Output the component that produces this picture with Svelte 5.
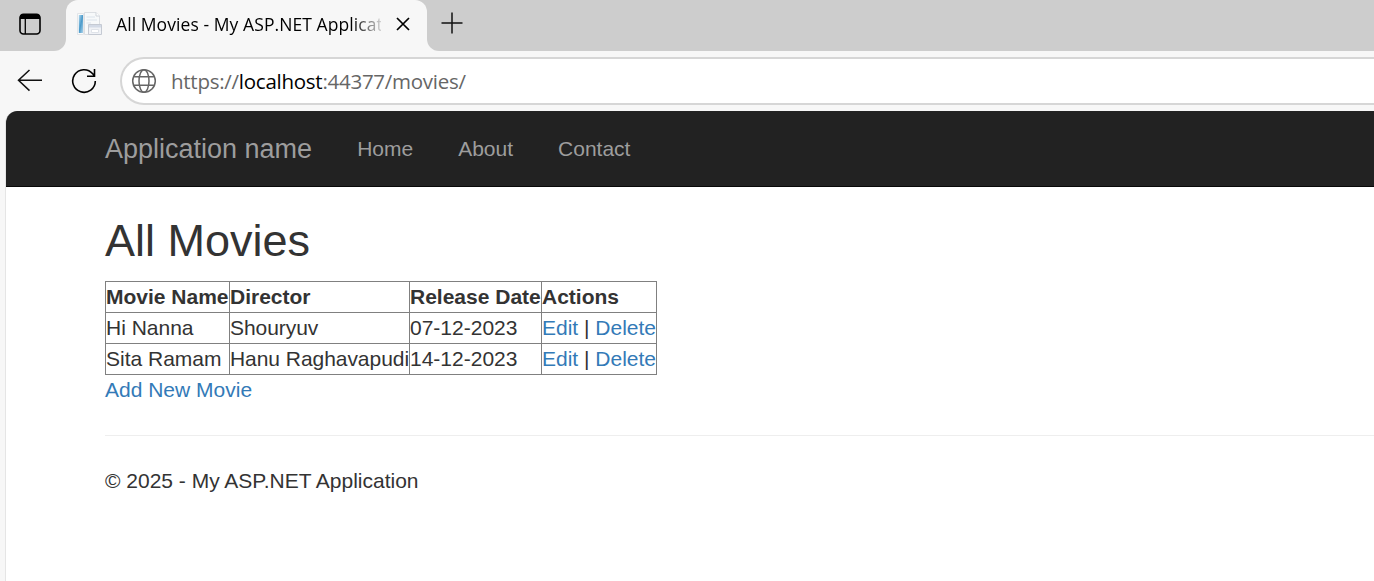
<script>
  const movies = [
    { name: 'Hi Nanna', director: 'Shouryuv', released: '07-12-2023' },
    { name: 'Sita Ramam', director: 'Hanu Raghavapudi', released: '14-12-2023' }
  ];
  const links = ['Home', 'About', 'Contact'];
</script>

<div class="browser">
  <div class="strip">
    <div class="strip-left">
      <svg width="24" height="24" viewBox="0 0 24 24" fill="none">
        <rect x="2" y="2.2" width="20" height="19.8" rx="3.5" stroke="#000" stroke-width="1.6" />
        <path d="M2 7V5.2C2 3.2 3.2 2 5.2 2H18.8C20.8 2 22 3.2 22 5.2V7Z" fill="#000" />
        <path d="M7.3 7V22" stroke="#000" stroke-width="1.3" />
      </svg>
    </div>
    <div class="tab-wrap">
      <div class="tab">
        <svg class="favicon" width="26" height="26" viewBox="0 0 26 26">
          <defs>
            <linearGradient id="blue" x1="0" y1="0" x2="1" y2="1">
              <stop offset="0" stop-color="#b5d9ee" />
              <stop offset=".5" stop-color="#4b9aca" />
              <stop offset="1" stop-color="#aed4eb" />
            </linearGradient>
          </defs>
          <path d="M.5 2.5H6.5V23.5H.5Z" fill="#fafafa" stroke="#e2e5e8" />
          <path d="M1.800 4H6V22H1.800Z" fill="url(#blue)" />
          <path d="M7.5 1.5H19L22.500 5V23.5H7.5Z" fill="#f7f9fa" stroke="#dcdfe3" />
          <path d="M19 1.5V5H22.500" fill="#fff" stroke="#cfd4da" />
          <path d="M9.500 6H18M9.500 9H20M9.500 12H14" stroke="#dbe3eb" />
          <path d="M11.500 13.500H24.500V23.500H11.500Z" fill="#f0f2f6" stroke="#c5cad3" />
          <path d="M12 14H24V16.500H12Z" fill="#d3dae6" />
          <path d="M14.500 18.500H21.500V21.500H14.500Z" fill="#fff" stroke="#dfe3e9" />
        </svg>
        <span class="title">All Movies - My ASP.NET Applicati</span>
        <svg class="close" width="14" height="14" viewBox="0 0 14 14">
          <path d="M1 1L13 13M13 1L1 13" stroke="#000" stroke-width="1.7" />
        </svg>
      </div>
    </div>
    <div class="strip-right">
      <svg width="22" height="22" viewBox="0 0 22 22">
        <path d="M11 .5V21.5M.5 11H21.5" stroke="#111" stroke-width="1.5" />
      </svg>
    </div>
  </div>

  <div class="toolbar">
    <svg class="back" width="26" height="24" viewBox="0 0 26 24" fill="none" stroke="#111" stroke-width="1.5">
      <path d="M12.500 1L1.500 11.300L12.500 21.600M1.500 11.300H25" />
    </svg>
    <svg class="reload" width="26" height="26" viewBox="0 0 26 26" fill="none" stroke="#000" stroke-width="1.6">
      <path d="M24.300 13A11.300 11.300 0 1 1 21.700 5.800L23.500 8M23.500 1V8.300H16" />
    </svg>
    <div class="address">
      <svg width="26" height="26" viewBox="0 0 26 26" fill="none" stroke="#666" stroke-width="1.5">
        <circle cx="13" cy="13" r="11.3" />
        <ellipse cx="13" cy="13" rx="5" ry="11.3" />
        <path d="M2.500 8.800H23.500M2.500 17.200H23.500" />
      </svg>
      <span class="url">https://<b>localhost</b>:44377/movies/</span>
    </div>
  </div>

  <div class="page">
    <nav>
      <a class="brand" href="#home">Application name</a>
      {#each links as link}
        <a href="#{link}">{link}</a>
      {/each}
    </nav>
    <main>
      <h2>All Movies</h2>
      <table>
        <colgroup><col class="c1" /><col class="c2" /><col class="c3" /><col class="c4" /></colgroup>
        <thead>
          <tr><th>Movie Name</th><th>Director</th><th>Release Date</th><th>Actions</th></tr>
        </thead>
        <tbody>
          {#each movies as m}
            <tr>
              <td>{m.name}</td>
              <td class="director">{m.director}</td>
              <td>{m.released}</td>
              <td><a href="#edit">Edit</a> | <a href="#delete">Delete</a></td>
            </tr>
          {/each}
        </tbody>
      </table>
      <a class="add" href="#new">Add New Movie</a>
      <hr />
      <footer>© 2025 - My ASP.NET Application</footer>
    </main>
  </div>
</div>

<style>
  :global(body) { margin: 0; overflow: hidden; }
  .browser {
    width: 1374px;
    height: 581px;
    overflow: hidden;
    display: flex;
    flex-direction: column;
    background: #f7f7f7;
    font-family: "Open Sans", sans-serif;
  }
  svg { display: block; flex: none; }
  .strip { display: flex; height: 51px; flex: none; }
  .strip-left {
    width: 66px;
    box-sizing: border-box;
    padding: 12px 0 0 18px;
    background: #cdcdcd;
    border-bottom-right-radius: 12px;
  }
  .tab-wrap { width: 361px; background: linear-gradient(#cdcdcd 50%, #f7f7f7 50%); }
  .tab {
    height: 51px;
    box-sizing: border-box;
    display: flex;
    align-items: center;
    padding: 0 0 3px 11px;
    background: #f7f7f7;
    border-radius: 12px 12px 0 0;
  }
  .title {
    width: 265px;
    margin-left: 13px;
    overflow: hidden;
    white-space: nowrap;
    font-size: 17.5px;
    line-height: 30px;
    letter-spacing: 0.08px;
    color: #000;
    -webkit-mask-image: linear-gradient(90deg, #000 236px, transparent 270px);
    mask-image: linear-gradient(90deg, #000 236px, transparent 270px);
  }
  .close { margin-left: 15px; }
  .strip-right {
    flex: 1;
    padding: 12px 0 0 14px;
    background: #cdcdcd;
    border-bottom-left-radius: 12px;
  }
  .toolbar { display: flex; align-items: center; height: 60px; flex: none; padding-left: 17px; }
  .reload { margin-left: 28px; }
  .address {
    flex: 1;
    height: 48px;
    box-sizing: border-box;
    margin-left: 23px;
    padding-left: 9px;
    display: flex;
    align-items: center;
    background: #fff;
    border: 2px solid #d6d6d6;
    border-right: 0;
    border-radius: 24px 0 0 24px;
  }
  .url {
    margin-left: 14px;
    font-size: 20.5px;
    line-height: 30px;
    letter-spacing: -0.26px;
    color: #666;
    white-space: nowrap;
  }
  .url b { font-weight: 400; color: #000; }
  .page {
    flex: 1;
    margin-left: 5px;
    border-left: 1px solid #e5e5e5;
    border-top-left-radius: 12px;
    overflow: hidden;
    background: #fff;
    font-family: "Liberation Sans", Arial, sans-serif;
    font-size: 21px;
    line-height: 30px;
    color: #333;
  }
  a { color: #337ab7; text-decoration: none; }
  nav {
    display: flex;
    align-items: center;
    gap: 45px;
    height: 75px;
    padding-left: 99px;
    background: #222;
    border-bottom: 1px solid #080808;
  }
  nav a { color: #9d9d9d; }
  .brand { font-size: 27px; }
  main { padding-left: 99px; }
  h2 { margin: 28.5px 0 16px; font-size: 45px; line-height: 49.5px; font-weight: 500; }
  table { width: 552px; table-layout: fixed; border-collapse: collapse; }
  .c1 { width: 124px; }
  .c2 { width: 180px; }
  .c3 { width: 132px; }
  .c4 { width: 115px; }
  th, td { padding: 0; border: 1px solid #808080; text-align: left; white-space: nowrap; }
  th { font-weight: 700; }
  .director { letter-spacing: -0.05px; }
  .add { display: block; }
  hr { margin: 30px 0; border: 0; border-top: 1px solid #eee; }
</style>
